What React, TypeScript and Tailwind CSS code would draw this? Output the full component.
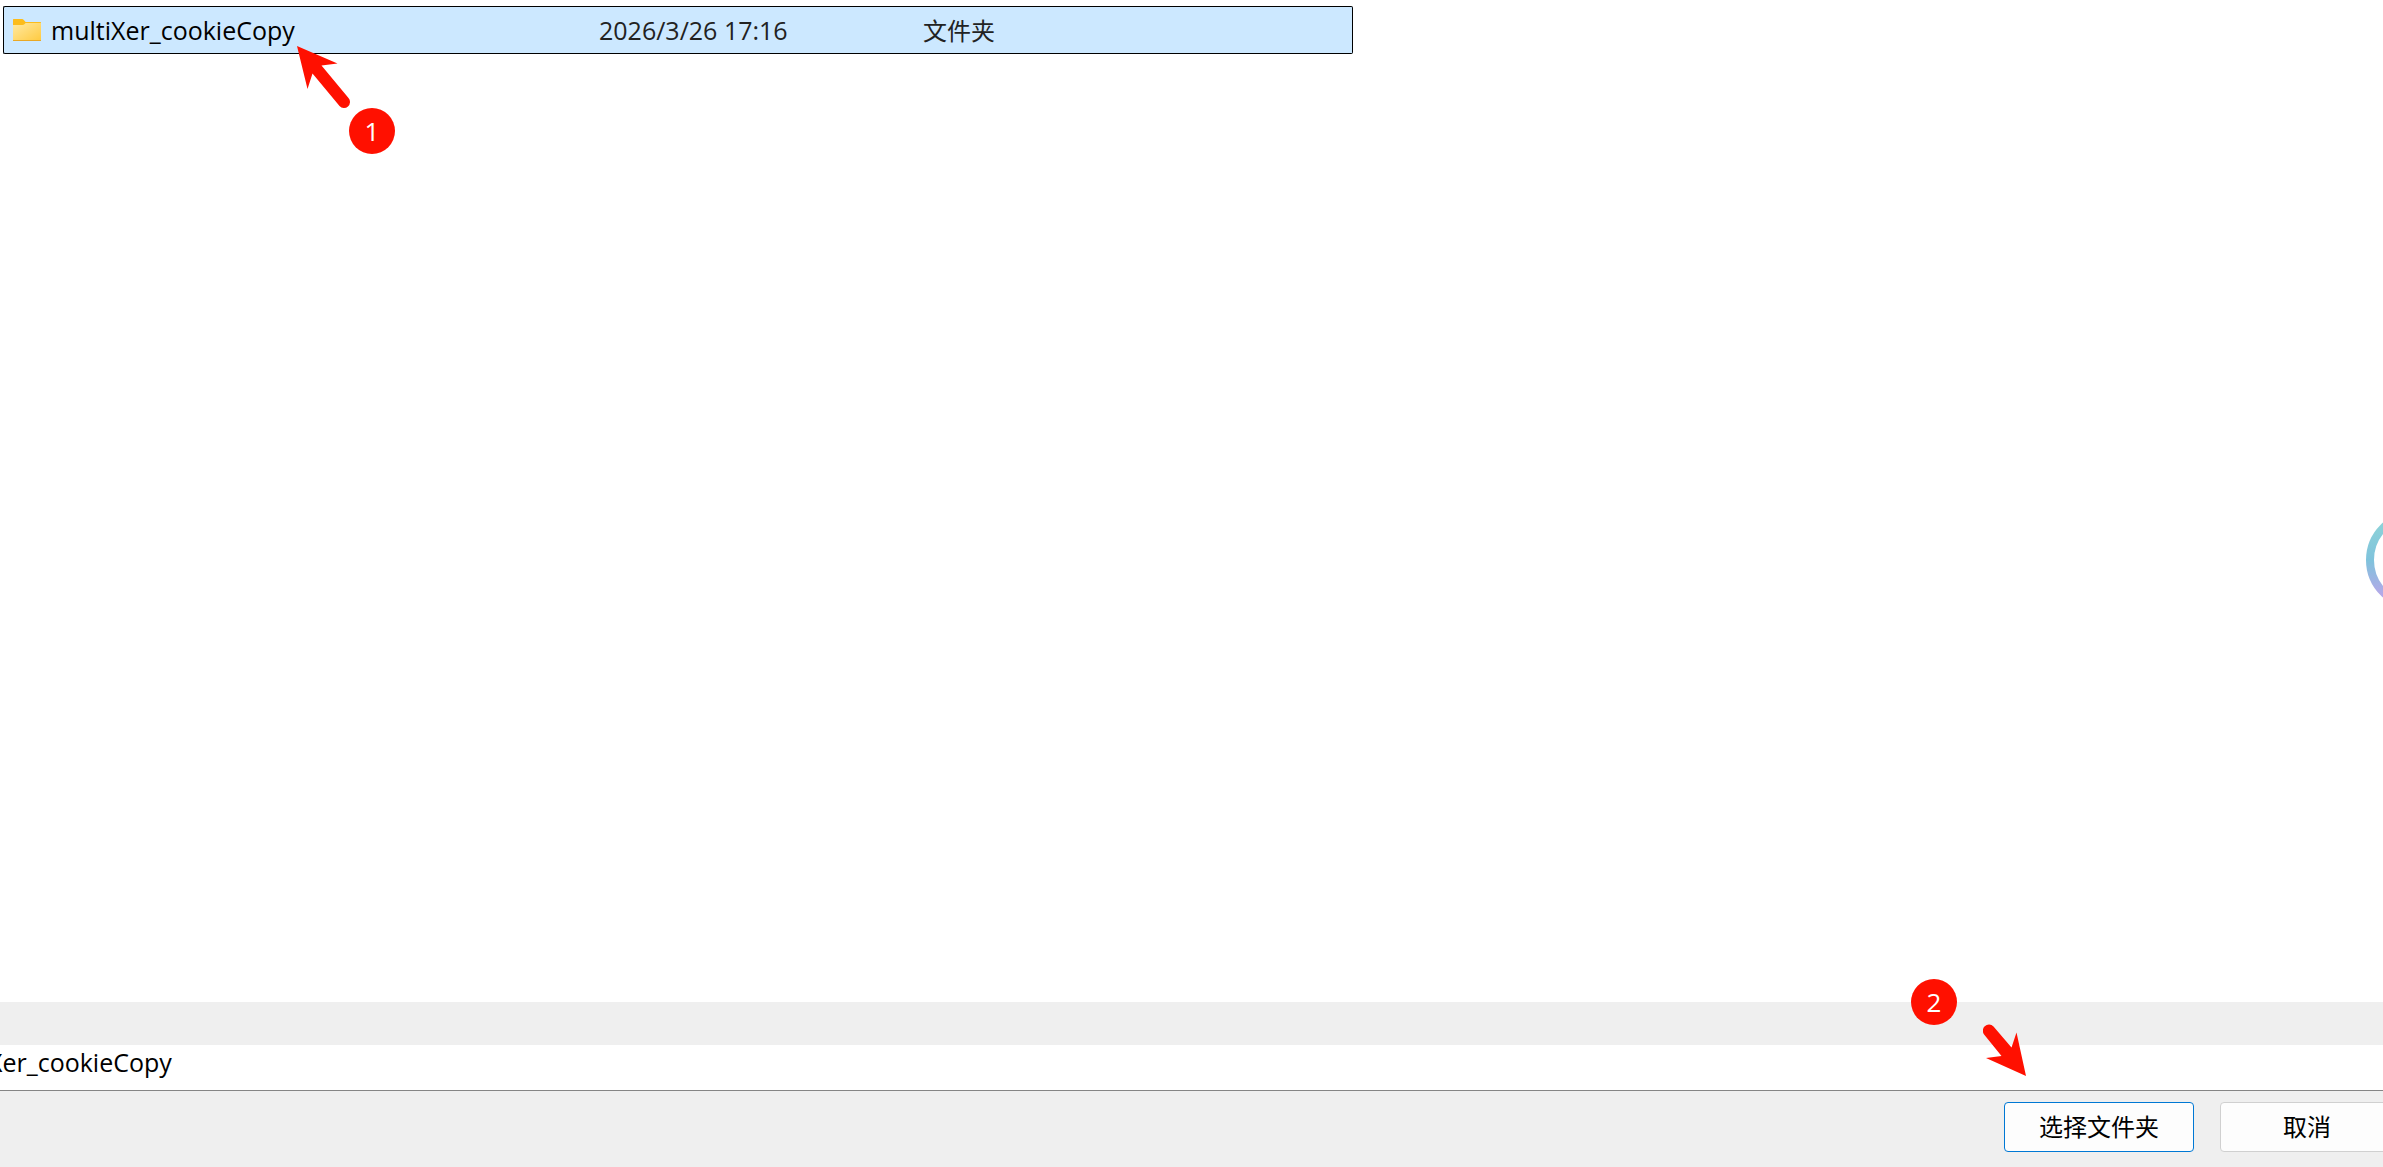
import { useState } from 'react';

type FolderItem = {
    id: number;
    name: string;
    modified: string;
    type: string;
};

const items: FolderItem[] = [
    { id: 1, name: 'multiXer_cookieCopy', modified: '2026/3/26 17:16', type: '文件夹' },
];

function FolderIcon() {
    return (
        <svg viewBox="0 0 28 22" className="h-[22px] w-7 shrink-0" aria-hidden="true">
            <defs>
                <linearGradient id="folder" x1="0" y1="0" x2="1" y2="1">
                    <stop offset="0" stopColor="#ffe9a2" />
                    <stop offset="1" stopColor="#ffca3f" />
                </linearGradient>
            </defs>
            <path d="M0 .6Q0 0 .6 0H9Q10 0 10.8 .9L12.6 3H27.4Q28 3 28 3.6V12H0Z" fill="#fcbc1b" />
            <path d="M0 6H9.6Q10.6 6 11.4 5.3L12.6 4H28V21.4Q28 22 27.4 22H.6Q0 22 0 21.4Z" fill="url(#folder)" />
            <path d="M0 21H28V21.4Q28 22 27.4 22H.6Q0 22 0 21.4Z" fill="#e9a825" />
        </svg>
    );
}

function StepBadge({ step }: { step: number }) {
    return (
        <span className="flex size-[46px] items-center justify-center rounded-full bg-[#ff1000] text-[26px] leading-none text-white">
            {step}
        </span>
    );
}

export default function App() {
    const [selected, setSelected] = useState(1);
    const [folderName, setFolderName] = useState('multiXer_cookieCopy');

    return (
        <div className="relative flex min-h-screen flex-col overflow-hidden bg-white font-['Open_Sans','Noto_Sans_CJK_SC',sans-serif] text-[25px] text-black">
            {/* File list */}
            <main className="flex-1 pt-1.5 pl-[3px]">
                <table className="w-[1350px] table-fixed border-separate border-spacing-0" aria-label="文件夹">
                    <colgroup>
                        <col className="w-[588px]" />
                        <col className="w-[324px]" />
                        <col />
                    </colgroup>
                    <tbody>
                        {items.map((item) => (
                            <tr
                                key={item.id}
                                onClick={() => setSelected(item.id)}
                                className={selected === item.id ? 'bg-[#cce8ff]' : 'bg-white'}
                            >
                                <td className="h-12 rounded-l-xs border-y border-l border-black p-0 pl-[9px]">
                                    <div className="flex items-center gap-2.5">
                                        <FolderIcon />
                                        <span className="leading-8">{item.name}</span>
                                    </div>
                                </td>
                                <td className="h-12 border-y border-black p-0 pl-2 leading-8 text-[#222]">{item.modified}</td>
                                <td className="h-12 rounded-r-xs border-y border-r border-black p-0 pt-0.5 pl-2 text-2xl leading-8 text-[#222]">
                                    {item.type}
                                </td>
                            </tr>
                        ))}
                    </tbody>
                </table>
            </main>

            {/* Folder name, scrolled to the end of the text */}
            <div className="border-t-[43px] border-[#efefef]">
                <div className="flex h-[46px] border-b border-[#858585]">
                    <input
                        type="text"
                        aria-label="文件夹"
                        value={folderName}
                        onChange={(e) => setFolderName(e.target.value)}
                        className="-ml-18 h-9 flex-1 bg-transparent outline-none"
                    />
                </div>
            </div>

            <footer className="flex h-[76px] justify-end gap-[26px] bg-[#efefef] pt-[11px] text-2xl">
                <button type="button" className="h-[50px] w-[190px] rounded border border-[#0078d4] bg-[#fdfdfd]">
                    选择文件夹
                </button>
                <button type="button" className="-mr-[11px] h-[50px] w-[174px] rounded border border-[#d0d0d0] bg-[#fdfdfd]">
                    取消
                </button>
            </footer>

            {/* Floating assistant ring */}
            <svg viewBox="0 0 100 100" className="absolute top-[510px] -right-[83px] size-[100px]" aria-hidden="true">
                <defs>
                    <linearGradient id="ring" x1="0" y1="0" x2="0" y2="1">
                        <stop offset="0.1" stopColor="#8dd2d8" />
                        <stop offset="0.5" stopColor="#7fc3dc" />
                        <stop offset="0.88" stopColor="#b4a8e8" />
                    </linearGradient>
                </defs>
                <circle cx="50" cy="50" r="46" fill="none" stroke="url(#ring)" strokeWidth="8" />
            </svg>

            {/* Step 1 */}
            <div className="pointer-events-none absolute top-[46px] left-[297px]">
                <svg viewBox="0 0 54 63" className="h-[63px] w-[54px]" aria-hidden="true">
                    <path d="M0 0L40.5 17.5L24.5 19.5L51.5 52A6 6 0 0 1 42.5 60L15.5 27.5L10.5 43Z" fill="#ff1000" />
                </svg>
            </div>
            <div className="pointer-events-none absolute top-[108px] left-[349px]">
                <StepBadge step={1} />
            </div>

            {/* Step 2 */}
            <div className="pointer-events-none absolute right-[426px] bottom-[142px]">
                <StepBadge step={2} />
            </div>
            <div className="pointer-events-none absolute right-[357px] bottom-[91px]">
                <svg viewBox="0 0 43 52" className="h-[52px] w-[43px]" aria-hidden="true">
                    <path d="M43 52L3 34L18.5 32L1.5 11A6 6 0 0 1 10.5 2.5L28.5 23.5L33.5 8.5Z" fill="#ff1000" />
                </svg>
            </div>
        </div>
    );
}
